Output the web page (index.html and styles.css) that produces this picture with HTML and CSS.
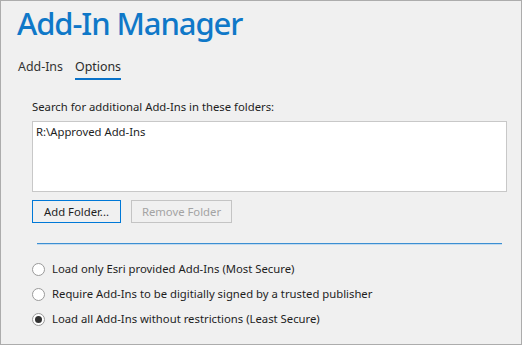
FILE: index.html
```html
<!DOCTYPE html>
<html lang="en">
<head>
  <meta charset="UTF-8">
  <title>Add-In Manager</title>
  <link rel="stylesheet" href="styles.css">
</head>
<body>

  <div id="window">
    <h1 class="title">Add-In Manager</h1>

    <div class="tabs">
      <span class="tab">Add-Ins</span>
      <span class="tab active">Options</span>
    </div>

    <div class="options">
      <div class="label">Search for additional Add-Ins in these folders:</div>
      <div class="folders">
        <div class="folder">R:\Approved Add-Ins</div>
      </div>

      <div class="buttons">
        <button class="btn focused">Add Folder...</button>
        <button class="btn" disabled>Remove Folder</button>
      </div>

      <div class="separator"></div>

      <div class="radios">
        <label class="radio"><span class="dot"></span>Load only Esri provided Add-Ins (Most Secure)</label>
        <label class="radio"><span class="dot"></span>Require Add-Ins to be digitially signed by a trusted publisher</label>
        <label class="radio checked"><span class="dot"></span>Load all Add-Ins without restrictions (Least Secure)</label>
      </div>
    </div>
  </div>

</body>
</html>
```

FILE: styles.css
```css
html, body {
  margin: 0;
  height: 100%;
}
body {
  font-family: "Noto Sans", "Open Sans", sans-serif;
  font-size: 11.3px;
  color: #1e1e1e;
}
#window {
  box-sizing: border-box;
  height: 345px;
  width: 522px;
  border: 1px solid #acacac;
  background: #f0f0f0;
  padding: 0 0 0 16px;
}
.title {
  margin: 0;
  padding-top: 2px;
  font-size: 31px;
  font-weight: 500;
  color: #0f78c8;
  line-height: 40px;
  letter-spacing: -1.1px;
}
.tabs {
  display: flex;
  gap: 12px;
  margin-top: 15px;
  padding-left: 1px;
  font-size: 12.4px;
  color: #333;
}
.tab {
  padding-bottom: 2px;
  border-bottom: 2px solid transparent;
  line-height: 18px;
}
.tab.active {
  border-bottom-color: #0a72c8;
  color: #2b2b2b;
}
.options {
  padding-left: 15px;
  width: 475px;
}
.label {
  margin-top: 19px;
  line-height: 16px;
}
.folders {
  margin-top: 6px;
  background: #fff;
  border: 1px solid #c8c8c8;
  padding: 2px 3px;
  box-sizing: border-box;
  height: 71px;
}
.folder {
  line-height: 16px;
}
.buttons {
  display: flex;
  gap: 10px;
  margin-top: 8px;
}
.btn {
  height: 23px;
  box-sizing: border-box;
  font: inherit;
  background: #f0f0f0;
  border: 1px solid #adadad;
  color: #1e1e1e;
  padding: 0;
  white-space: nowrap;
}
.btn.focused {
  width: 89px;
  border-color: #0078d7;
}
.btn:disabled {
  width: 101px;
  border-color: #c4c4c4;
  color: #a3a3a3;
}
.separator {
  margin: 20px 5px 0 5px;
  height: 1px;
  background: #3c8fd2;
  border-bottom: 1px solid #c3dbef;
}
.radios {
  display: flex;
  flex-direction: column;
  gap: 9px;
  margin-top: 16px;
}
.radio {
  display: flex;
  align-items: center;
  gap: 7px;
  line-height: 16px;
}
.dot {
  width: 11px;
  height: 11px;
  border: 1px solid #9a9a9a;
  border-radius: 50%;
  background: #fff;
  position: relative;
}
.radio.checked .dot::after {
  content: "";
  position: absolute;
  left: 2px;
  top: 2px;
  width: 7px;
  height: 7px;
  border-radius: 50%;
  background: #333;
}
```
